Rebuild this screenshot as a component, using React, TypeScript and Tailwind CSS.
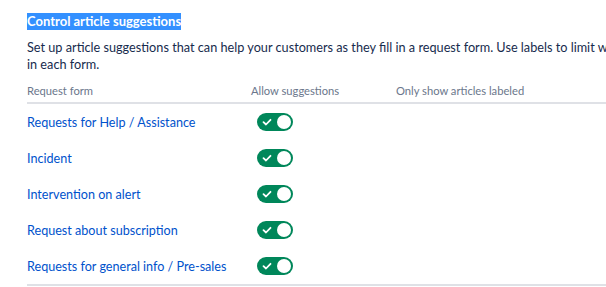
import React from "react";

const forms = [
    "Requests for Help / Assistance",
    "Incident",
    "Intervention on alert",
    "Request about subscription",
    "Requests for general info / Pre-sales",
];

function Toggle() {
    return (
        <div className="flex items-center justify-between w-[36px] h-[18px] rounded-full bg-[#00875a] pl-[5px] pr-[2px]">
            <svg width="10" height="10" viewBox="0 0 10 10" fill="none">
                <path d="M1.5 5.2 L4 7.5 L8.5 2.8" stroke="white" strokeWidth="1.8" strokeLinecap="round" strokeLinejoin="round" />
            </svg>
            <div className="w-[14px] h-[14px] rounded-full bg-white" />
        </div>
    );
}

export default function App() {
    return (
        <div className="w-[606px] h-[287px] overflow-hidden bg-white pl-[27px] pt-[13px] font-['Lato',sans-serif] text-[#172b4d]">
            <h2 className="text-[13px] leading-[17px] font-bold">
                <span className="inline-block align-top bg-[#3390ff] text-white">Control article suggestions</span>
            </h2>
            <p className="mt-[9px] text-[12.7px] leading-[17px] whitespace-nowrap">
                Set up article suggestions that can help your customers as they fill in a request form. Use labels to limit which articles are suggested
                <br />
                in each form.
            </p>
            <div className="mt-[6px] w-[700px]">
                <div className="flex h-[25px] items-center border-b-2 border-[#dfe1e6] text-[11.2px] leading-[15px] text-[#6b778c]">
                    <div className="w-[224px]">Request form</div>
                    <div className="w-[145px]">Allow suggestions</div>
                    <div>Only show articles labeled</div>
                </div>
                <div className="border-b-2 border-[#dfe1e6]">
                    {forms.map((name) => (
                        <div key={name} className="flex h-[36px] items-center text-[12.6px] leading-[17px]">
                            <div className="w-[224px] whitespace-nowrap">
                                <a href="#" className="text-[#0052cc]">{name}</a>
                            </div>
                            <div className="w-[145px] pl-[6px]">
                                <Toggle />
                            </div>
                            <div />
                        </div>
                    ))}
                </div>
            </div>
        </div>
    );
}
